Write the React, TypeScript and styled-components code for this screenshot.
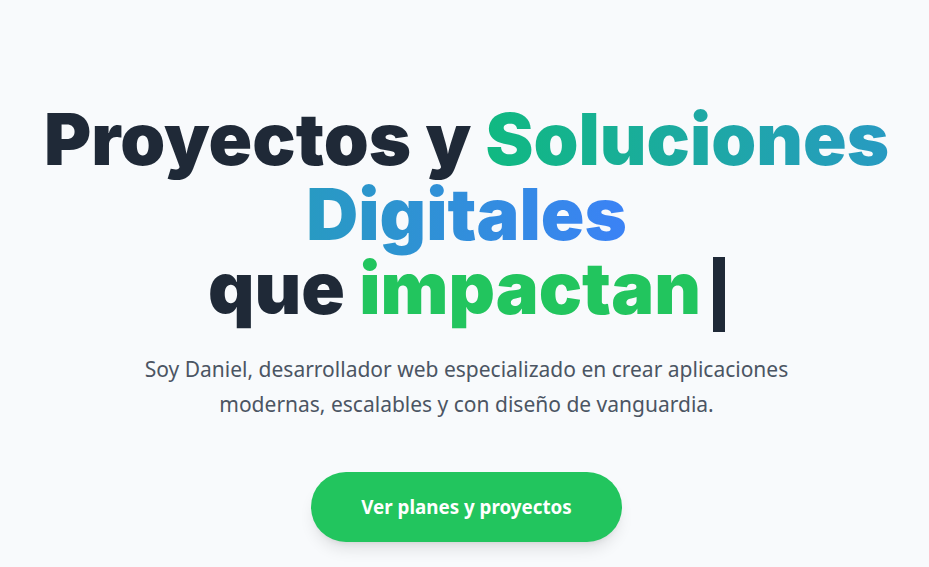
import React from "react";
import styled, { createGlobalStyle } from "styled-components";

const GlobalStyle = createGlobalStyle`
  html, body { margin: 0; padding: 0; }
  body {
    background: #f8fafc;
    font-family: "Noto Sans", "Open Sans", sans-serif;
    -webkit-font-smoothing: antialiased;
  }
`;

const Hero = styled.section`
  min-height: 567px;
  box-sizing: border-box;
  padding: 102px 14px 0 18px;
  display: flex;
  flex-direction: column;
  align-items: center;
  text-align: center;
`;

const Title = styled.h1`
  margin: 0;
  font-family: "Inter", "Noto Sans", sans-serif;
  font-weight: 900;
  font-size: 72px;
  line-height: 74.5px;
  letter-spacing: 0;
  color: #1f2937;
`;

const Gradient = styled.span`
  background: linear-gradient(90deg, #10b981, #3b82f6);
  -webkit-background-clip: text;
  background-clip: text;
  color: transparent;
  -webkit-text-fill-color: transparent;
`;

const Accent = styled.span<{ $color: string }>`
  color: ${(p) => p.$color};
`;

const Cursor = styled.span`
  display: inline-block;
  width: 12px;
  height: 75px;
  margin-left: 12px;
  margin-bottom: -8px;
  vertical-align: -10px;
  background: #1f2937;
`;

const Lead = styled.p`
  margin: 26px 0 0;
  max-width: 672px;
  font-size: 21px;
  line-height: 35px;
  color: #4b5563;
  font-weight: 400;
`;

const Cta = styled.button`
  margin-top: 50px;
  height: 70px;
  padding: 0 50px;
  border: none;
  border-radius: 9999px;
  background: #22c55e;
  color: #ffffff;
  font-family: "Noto Sans", "Open Sans", sans-serif;
  font-weight: 700;
  font-size: 18.8px;
  line-height: 28px;
  cursor: pointer;
  box-shadow: 0 10px 15px -3px rgba(0, 0, 0, 0.1), 0 4px 6px -4px rgba(0, 0, 0, 0.1);
`;

export default function App() {
  return (
    <>
      <GlobalStyle />
      <Hero>
        <Title>
          Proyectos y{" "}
          <Gradient>
            Soluciones
            <br />
            Digitales
          </Gradient>
          <br />
          que <Accent $color="#22c55e">impactan</Accent>
          <Cursor aria-hidden="true" />
        </Title>
        <Lead>
          Soy Daniel, desarrollador web especializado en crear aplicaciones
          modernas, escalables y con diseño de vanguardia.
        </Lead>
        <Cta>Ver planes y proyectos</Cta>
      </Hero>
    </>
  );
}
